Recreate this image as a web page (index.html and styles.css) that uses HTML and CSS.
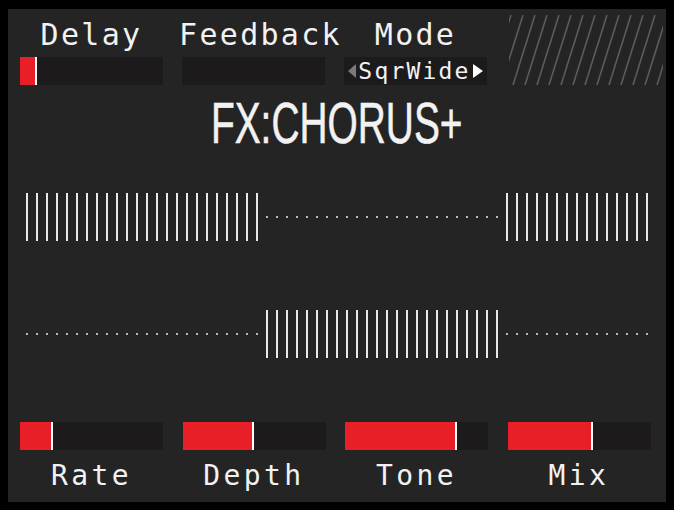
FILE: index.html
```html
<!DOCTYPE html>
<html>
<head>
    <title>FX Chorus</title>
    <link rel="stylesheet" href="styles.css">
</head>
<body>
<div class="screen">
    <div class="top">
        <div class="param">
            <div class="label">Delay</div>
            <div class="bar"><div class="fill" style="width: 12%"></div></div>
        </div>
        <div class="param">
            <div class="label label-wide">Feedback</div>
            <div class="bar"></div>
        </div>
        <div class="param">
            <div class="label">Mode</div>
            <div class="select">
                <span class="arrow arrow-left"></span>
                <span class="select-text">SqrWide</span>
                <span class="arrow arrow-right"></span>
            </div>
        </div>
        <svg class="hatch" width="154" height="70" viewBox="0 0 154 70">
            <g stroke="#5c5c5c" stroke-width="1.6">
                <line x1="-20" y1="70" x2="2" y2="0"/>
                <line x1="-8" y1="70" x2="14" y2="0"/>
                <line x1="4" y1="70" x2="26" y2="0"/>
                <line x1="16" y1="70" x2="38" y2="0"/>
                <line x1="28" y1="70" x2="50" y2="0"/>
                <line x1="40" y1="70" x2="62" y2="0"/>
                <line x1="52" y1="70" x2="74" y2="0"/>
                <line x1="64" y1="70" x2="86" y2="0"/>
                <line x1="76" y1="70" x2="98" y2="0"/>
                <line x1="88" y1="70" x2="110" y2="0"/>
                <line x1="100" y1="70" x2="122" y2="0"/>
                <line x1="112" y1="70" x2="134" y2="0"/>
                <line x1="124" y1="70" x2="146" y2="0"/>
                <line x1="136" y1="70" x2="158" y2="0"/>
                <line x1="148" y1="70" x2="170" y2="0"/>
            </g>
        </svg>
    </div>

    <div class="title"><span>FX:CHORUS+</span></div>

    <!-- dry / wet gate patterns -->
    <div class="wave wave-first">
        <div class="seg lines" style="width: 240px"></div>
        <div class="seg dots" style="width: 240px"></div>
        <div class="seg lines" style="width: 150px"></div>
    </div>
    <div class="wave wave-second">
        <div class="seg dots" style="width: 240px"></div>
        <div class="seg lines" style="width: 240px"></div>
        <div class="seg dots" style="width: 150px"></div>
    </div>

    <div class="bottom">
        <div class="param">
            <div class="bar"><div class="fill" style="width: 23%"></div></div>
            <div class="label label-bottom">Rate</div>
        </div>
        <div class="param">
            <div class="bar"><div class="fill" style="width: 50%"></div></div>
            <div class="label label-bottom">Depth</div>
        </div>
        <div class="param">
            <div class="bar"><div class="fill" style="width: 78%"></div></div>
            <div class="label label-bottom">Tone</div>
        </div>
        <div class="param">
            <div class="bar"><div class="fill" style="width: 60%"></div></div>
            <div class="label label-bottom">Mix</div>
        </div>
    </div>
</div>
</body>
</html>
```

FILE: styles.css
```css
body {
  margin: 0;
  background: #000;
  width: 674px;
  height: 510px;
  overflow: hidden;
}

.screen {
  margin: 9px 0 0 8px;
  width: 658px;
  height: 493px;
  background: #242424;
  color: #f2f2f2;
  font-family: "DejaVu Sans Mono", monospace;
  overflow: hidden;
}

.top {
  display: grid;
  grid-template-columns: repeat(3, 143px) 154px;
  column-gap: 19px;
  padding: 6px 0 0 12px;
}

.bottom {
  display: grid;
  grid-template-columns: repeat(4, 143px);
  column-gap: 19.5px;
  padding-left: 12px;
  margin-top: 64px;
}

.param {
  display: flex;
  flex-direction: column;
  align-items: center;
}

.label {
  margin-top: 3.5px;
  font-size: 30px;
  line-height: 32px;
  letter-spacing: 2.3px;
  white-space: nowrap;
}

.label-wide {
  padding-left: 14px;
}

.label-bottom {
  margin-top: 10px;
  font-size: 28px;
  letter-spacing: 3.4px;
}

.bar {
  width: 143px;
  height: 28px;
  margin-top: 6px;
  background: #1c1a1a;
}

.bottom .bar {
  margin-top: 0;
}

.fill {
  height: 100%;
  box-sizing: border-box;
  background: #e81f27;
  border-right: 2px solid #fff;
}

.select {
  width: 143px;
  height: 28px;
  margin-top: 6px;
  background: #1c1a1a;
  display: flex;
  align-items: center;
  justify-content: center;
  gap: 2px;
}

.select-text {
  font-size: 23px;
  letter-spacing: 2.2px;
  line-height: 28px;
}

.arrow {
  width: 0;
  height: 0;
  border-top: 7px solid transparent;
  border-bottom: 7px solid transparent;
}

.arrow-left {
  border-right: 8px solid #7a7a7a;
}

.arrow-right {
  border-left: 10px solid #fff;
}

.hatch {
  display: block;
  margin-left: 3px;
}

.title {
  margin-top: 14.5px;
  height: 46px;
  text-align: center;
  font-family: "Liberation Sans Narrow", "Liberation Sans", sans-serif;
  font-size: 58px;
  line-height: 46px;
}

.title span {
  display: inline-block;
  transform: scaleX(0.67);
  -webkit-text-stroke: 0.6px #f2f2f2;
}

.wave {
  display: flex;
  align-items: center;
  height: 48px;
  padding-left: 18px;
}

.wave-first {
  margin-top: 47.5px;
}

.wave-second {
  margin-top: 69px;
}

.seg.lines {
  height: 48px;
  background: repeating-linear-gradient(to right, #e8e8e8 0 2px, transparent 2px 10px);
}

.seg.dots {
  height: 2px;
  background: repeating-linear-gradient(to right, #b8b8b8 0 2px, transparent 2px 10px);
}
```
